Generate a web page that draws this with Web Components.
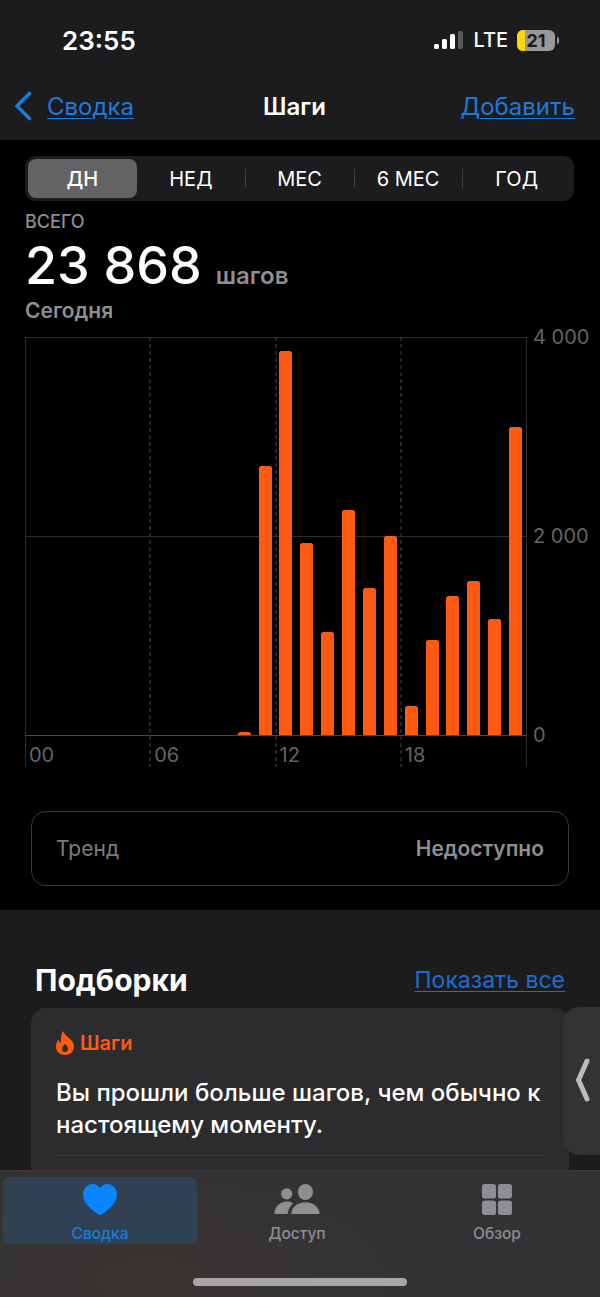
<!DOCTYPE html>
<html lang="ru">
<head>
<meta charset="utf-8">
<title>Шаги</title>
<style>
  html, body { margin: 0; background: #000; }
  body { font-family: Inter, "Liberation Sans", sans-serif; color: #fff; }
</style>
</head>
<body>
<health-app>
  <status-bar time="23:55" battery="21"></status-bar>
  <nav-bar back="Сводка" action="Добавить">Шаги</nav-bar>
  <steps-panel>
    <seg-control items="ДН,НЕД,МЕС,6 МЕС,ГОД"></seg-control>
    <steps-summary label="ВСЕГО" value="23 868" unit="шагов" day="Сегодня"></steps-summary>
    <steps-chart></steps-chart>
    <trend-card label="Тренд" value="Недоступно"></trend-card>
  </steps-panel>
  <highlights-section heading="Подборки" link="Показать все">
    <highlight-card title="Шаги">Вы прошли больше шагов, чем обычно к настоящему моменту.</highlight-card>
  </highlights-section>
  <tab-bar slot="tabs"></tab-bar>
</health-app>

<script>
class HealthApp extends HTMLElement {
  constructor() {
    super();
    this.attachShadow({ mode: 'open' }).innerHTML = `
      <style>
        :host { display: block; position: relative; width: 600px; height: 1297px; overflow: hidden; background: #1c1c1e; }
        .scroll { height: 1170px; overflow: hidden; }
        .handle {
          position: absolute; right: 0; top: 1007px; width: 37px; height: 148px;
          background: #333335; border-radius: 17px 0 0 17px;
          display: flex; align-items: center; justify-content: center;
        }
        .handle svg { display: block; margin-left: 1px; margin-top: -2px; }
      </style>
      <div class="scroll"><slot></slot></div>
      <slot name="tabs"></slot>
      <div class="handle">
        <svg width="15" height="44" viewBox="0 0 15 44"><path d="M12 3 L3.5 22 L12 41" fill="none" stroke="#bdbdc0" stroke-width="5" stroke-linecap="round" stroke-linejoin="round"/></svg>
      </div>
    `;
  }
}

class StatusBar extends HTMLElement {
  connectedCallback() {
    this.attachShadow({ mode: 'open' }).innerHTML = `
      <style>
        :host { display: flex; align-items: center; justify-content: space-between; height: 80px; box-sizing: border-box; background: #1c1c1e; padding: 0 41px 0 62px; }
        .time { font-size: 26px; font-weight: 600; letter-spacing: 0; }
        .right { display: flex; align-items: center; }
        .signal { display: flex; align-items: flex-end; gap: 3px; height: 18px; margin-right: 10px; }
        .signal i { display: block; width: 5px; background: #fff; border-radius: 1.5px; }
        .lte { font-size: 20px; font-weight: 500; margin-right: 9px; }
        .battery { position: relative; width: 38px; height: 21px; border-radius: 6px; overflow: hidden; background: #98989a; }
        .battery .fill { position: absolute; left: 0; top: 0; bottom: 0; width: 8px; background: #ffd60a; }
        .battery .num { position: absolute; inset: 0; display: flex; align-items: center; justify-content: center; color: #1c1c1e; font-size: 18px; font-weight: 700; }
        .nub { width: 2px; height: 7px; background: #98989a; border-radius: 0 2px 2px 0; margin-left: 2px; }
      </style>
      <div class="time">${this.getAttribute('time')}</div>
      <div class="right">
        <div class="signal">
          <i style="height:5px"></i><i style="height:10px"></i><i style="height:15px"></i><i style="height:18px;background:#58585a"></i>
        </div>
        <div class="lte">LTE</div>
        <div class="battery"><div class="fill"></div><div class="num">${this.getAttribute('battery')}</div></div>
        <div class="nub"></div>
      </div>
    `;
  }
}

class NavBar extends HTMLElement {
  connectedCallback() {
    this.attachShadow({ mode: 'open' }).innerHTML = `
      <style>
        :host { display: grid; grid-template-columns: 1fr auto 1fr; align-items: center; height: 60px; box-sizing: border-box; padding: 0 25px 8px 14px; background: #1c1c1e; font-size: 24px; }
        a { color: #1b7bdc; text-decoration: underline; text-underline-offset: 3px; text-decoration-thickness: 1px; }
        .back { display: flex; align-items: center; gap: 15px; }
        .back svg { display: block; }
        .title { font-weight: 600; color: #fff; }
        .action { justify-self: end; }
      </style>
      <div class="back">
        <svg width="18" height="30" viewBox="0 0 18 30"><path d="M15.5 2.5 L3 15 L15.5 27.5" fill="none" stroke="#1b7bdc" stroke-width="3.6" stroke-linecap="round" stroke-linejoin="round"/></svg>
        <a>${this.getAttribute('back')}</a>
      </div>
      <div class="title"><slot></slot></div>
      <a class="action">${this.getAttribute('action')}</a>
    `;
  }
}

class StepsPanel extends HTMLElement {
  constructor() {
    super();
    this.attachShadow({ mode: 'open' }).innerHTML = `
      <style>
        :host { display: block; background: #000; padding: 16px 26px 25px 25px; height: 770px; box-sizing: border-box; }
      </style>
      <slot></slot>
    `;
  }
}

class SegControl extends HTMLElement {
  connectedCallback() {
    const items = this.getAttribute('items').split(',');
    const cells = items.map((t, i) => {
      const cls = i === 0 ? 'seg on' : (i > 1 ? 'seg sep' : 'seg');
      return `<div class="${cls}">${t}</div>`;
    }).join('');
    this.attachShadow({ mode: 'open' }).innerHTML = `
      <style>
        :host { display: grid; grid-template-columns: repeat(5, 1fr); height: 45px; box-sizing: border-box; padding: 3px; background: #1c1c1e; border-radius: 11px; }
        .seg { position: relative; display: flex; align-items: center; justify-content: center; font-size: 20px; font-weight: 400; color: #fff; border-radius: 8px; }
        .on { background: #636366; font-weight: 500; }
        .sep::before { content: ''; position: absolute; left: 0; top: 10px; bottom: 10px; width: 1px; background: #3f3f42; }
      </style>
      ${cells}
    `;
  }
}

class StepsSummary extends HTMLElement {
  connectedCallback() {
    this.attachShadow({ mode: 'open' }).innerHTML = `
      <style>
        :host { display: block; margin-top: 10px; }
        .label { font-size: 18px; line-height: 22px; color: #8e8e93; font-weight: 500; }
        .total { display: flex; align-items: baseline; gap: 14px; height: 60px; margin-top: 3px; line-height: 60px; }
        .value { font-size: 52px; font-weight: 500; color: #fff; }
        .unit { font-size: 24px; font-weight: 600; color: #8e8e93; }
        .day { font-size: 21px; line-height: 24px; margin-top: 3px; color: #8e8e93; font-weight: 600; }
      </style>
      <div class="label">${this.getAttribute('label')}</div>
      <div class="total"><span class="value">${this.getAttribute('value')}</span><span class="unit">${this.getAttribute('unit')}</span></div>
      <div class="day">${this.getAttribute('day')}</div>
    `;
  }
}

// высоты столбиков по часам, в пикселях от базовой линии
const HOURS = [0,0,0,0,0,0,0,0,0,0,3,269,384,192,103,225,147,199,29,95,139,154,116,308];

class StepsChart extends HTMLElement {
  connectedCallback() {
    const bars = HOURS.map(h => `<div class="cell">${h ? `<i style="height:${h}px"></i>` : ''}</div>`).join('');
    this.attachShadow({ mode: 'open' }).innerHTML = `
      <style>
        :host { display: grid; position: relative; grid-template-columns: 501px 1fr; grid-template-rows: 398px 32px; margin-top: 14px; width: 565px; }
        svg.grid { position: absolute; left: 0; top: 0; }
        .bars { position: relative; display: grid; grid-template-columns: repeat(24, 1fr); align-items: end; height: 398px; }
        .cell { display: flex; justify-content: center; align-items: flex-end; }
        .cell i { display: block; width: 13px; background: #ff5a14; border-radius: 2.5px 2.5px 0 0; }
        .y { display: flex; flex-direction: column; justify-content: space-between; padding-left: 7px; color: #636366; font-size: 20px; }
        .y span { height: 0; line-height: 0; white-space: nowrap; }
        .x { display: grid; grid-template-columns: repeat(4, 1fr); color: #636366; font-size: 20px; line-height: 41px; }
        .x span { padding-left: 4px; }
      </style>
      <svg class="grid" width="502" height="430" viewBox="0 0 502 430">
        <g stroke="#2e2e30" fill="none">
          <path d="M.5 0V430M501.5 0V430M0 .5H502M0 199.5H502"/>
        </g>
        <g stroke="#48484a" fill="none" stroke-dasharray="4 3">
          <path d="M125 0V430M251 0V430M376 0V430"/>
        </g>
        <path d="M0 398.5H502" stroke="#48484a"/>
      </svg>
      <div class="bars">${bars}</div>
      <div class="y"><span>4 000</span><span>2 000</span><span>0</span></div>
      <div class="x"><span>00</span><span>06</span><span>12</span><span>18</span></div>
    `;
  }
}

class TrendCard extends HTMLElement {
  connectedCallback() {
    this.attachShadow({ mode: 'open' }).innerHTML = `
      <style>
        :host { display: flex; align-items: center; justify-content: space-between; box-sizing: border-box; width: 538px; height: 75px; margin: 44px 0 0 6px; padding: 0 24px; border: 1.5px solid #3a3a3c; border-radius: 15px; font-size: 21px; }
        .label { color: #7c7c80; }
        .value { color: #8e8e93; font-weight: 600; }
      </style>
      <span class="label">${this.getAttribute('label')}</span>
      <span class="value">${this.getAttribute('value')}</span>
    `;
  }
}

class HighlightsSection extends HTMLElement {
  connectedCallback() {
    this.attachShadow({ mode: 'open' }).innerHTML = `
      <style>
        :host { display: block; background: #1c1c1e; padding: 50px 31px 0; }
        .head { display: flex; align-items: center; justify-content: space-between; height: 40px; padding: 0 4px; margin-bottom: 8px; }
        h2 { margin: 0; font-size: 30px; font-weight: 700; color: #fff; }
        a { font-size: 23px; color: #1b6fd0; text-decoration: underline; text-underline-offset: 3px; text-decoration-thickness: 1px; }
      </style>
      <div class="head"><h2>${this.getAttribute('heading')}</h2><a>${this.getAttribute('link')}</a></div>
      <slot></slot>
    `;
  }
}

class HighlightCard extends HTMLElement {
  connectedCallback() {
    this.attachShadow({ mode: 'open' }).innerHTML = `
      <style>
        :host { display: block; background: #2c2c2e; border-radius: 15px 15px 0 0; padding: 22px 25px 0; height: 170px; box-sizing: border-box; }
        .tag { display: flex; align-items: center; gap: 6px; color: #ff5a14; font-size: 20px; font-weight: 600; line-height: 26px; }
        .tag svg { display: block; }
        .text { margin-top: 21px; font-size: 24px; line-height: 32px; font-weight: 500; color: #fff; }
        hr { border: 0; height: 1px; margin: 14px 0 0; background: #3d3d40; }
      </style>
      <div class="tag">
        <svg width="18" height="24" viewBox="0 0 18 24"><path fill-rule="evenodd" fill="#ff5a14" d="M7 0C8 3 11 5 14 8C16.5 10.5 18 12.5 18 15.5C18 20.5 14 24 9 24C4 24 0 20.5 0 15.5C0 12.5 1 10 3 8.5C3 10 3.5 11.5 5 12C4.5 8 5 4 7 0ZM9.3 12.5C8.5 14.5 6 15.5 6 18C6 20 7.3 21 9 21C10.7 21 12 20 12 18C12 15.5 10 14.5 9.3 12.5Z"/></svg>
        ${this.getAttribute('title')}
      </div>
      <div class="text"><slot></slot></div>
      <hr>
    `;
  }
}

const TAB_ICONS = {
  heart: `<svg width="36" height="33" viewBox="0 0 36 33"><path fill="#0a84ff" d="M18 33C17 33 16 32.3 14.8 31.4C6.5 25.5 0 19.5 0 11.2C0 4.7 4.6 0 10.3 0C13.7 0 16.4 1.7 18 4.5C19.6 1.7 22.3 0 25.7 0C31.4 0 36 4.7 36 11.2C36 19.5 29.5 25.5 21.2 31.4C20 32.3 19 33 18 33Z"/></svg>`,
  people: `<svg width="48" height="33" viewBox="0 0 48 33"><g fill="#8e8e93"><circle cx="13" cy="10.5" r="6"/><ellipse cx="33" cy="8.5" rx="8" ry="8.5"/><path d="M18 32H48C48 25 42 19.500 33 19.500C24 19.500 18 25 18 32Z"/><path d="M0 32H14C14.500 27 17 23 20 20.500C18 19 15.500 18.500 13 18.500C6 18.500 0 24 0 32Z"/></g></svg>`,
  grid: `<svg width="32" height="33" viewBox="0 0 32 33"><g fill="#8e8e93"><rect width="15" height="15.500" rx="3"/><rect x="17" width="15" height="15.500" rx="3"/><rect y="17.500" width="15" height="15.500" rx="3"/><rect x="17" y="17.500" width="15" height="15.500" rx="3"/></g></svg>`
};

class TabBar extends HTMLElement {
  connectedCallback() {
    const tabs = [['heart', 'Сводка', true], ['people', 'Доступ'], ['grid', 'Обзор']];
    this.attachShadow({ mode: 'open' }).innerHTML = `
      <style>
        :host { display: block; height: 127px; box-sizing: border-box; padding: 6px 3px 0; border-top: 1px solid #3c3c3e; background: radial-gradient(ellipse 300px 130px at 150px 110px, #3b3432, transparent), #323234; }
        .tabs { display: grid; grid-template-columns: 194px 1fr 1fr; height: 67px; }
        .tab { display: flex; flex-direction: column; align-items: center; padding-top: 7px; box-sizing: border-box; height: 67px; color: #8e8e93; font-size: 15.500px; font-weight: 500; border-radius: 6px; }
        .tab svg { display: block; height: 33px; }
        .tab span { margin-top: 9px; line-height: 20px; }
        .tab.on { background: #2f4152; color: #1b7bdc; }
        .tab:nth-child(2) { transform: none; }
        .home { width: 214px; height: 8px; margin: 34px auto 0; border-radius: 4px; background: #a6a6a8; }
      </style>
      <div class="tabs">
        ${tabs.map(([icon, label, on]) => `<div class="tab ${on ? 'on' : ''}">${TAB_ICONS[icon]}<span>${label}</span></div>`).join('')}
      </div>
      <div class="home"></div>
    `;
  }
}

customElements.define('health-app', HealthApp);
customElements.define('status-bar', StatusBar);
customElements.define('nav-bar', NavBar);
customElements.define('steps-panel', StepsPanel);
customElements.define('seg-control', SegControl);
customElements.define('steps-summary', StepsSummary);
customElements.define('steps-chart', StepsChart);
customElements.define('trend-card', TrendCard);
customElements.define('highlights-section', HighlightsSection);
customElements.define('highlight-card', HighlightCard);
customElements.define('tab-bar', TabBar);
</script>
</body>
</html>
